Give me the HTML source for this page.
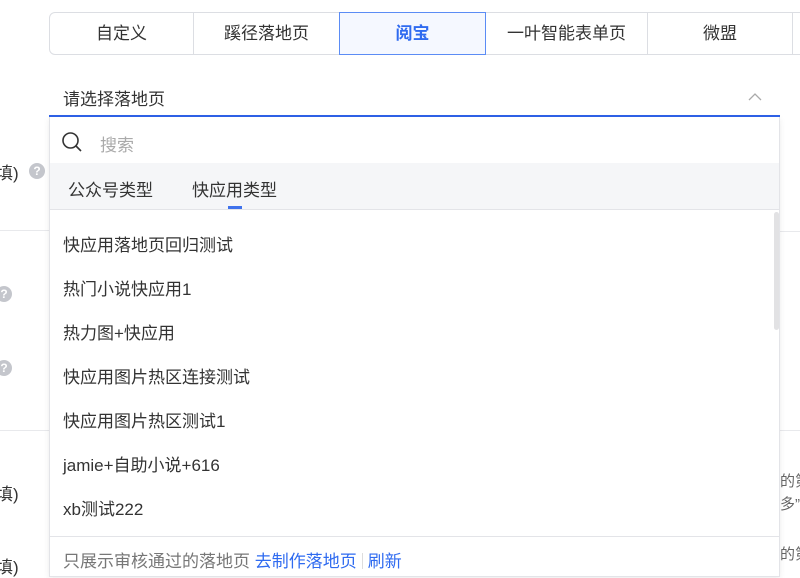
<!DOCTYPE html>
<html><head><meta charset="utf-8"><style>
*{margin:0;padding:0;box-sizing:border-box}
body{width:800px;height:574px;overflow:hidden;background:#fff;font-family:"Liberation Sans","Noto Sans CJK SC",sans-serif;color:#333;position:relative}
.a{position:absolute;white-space:nowrap}
.tab{position:absolute;top:12px;height:43px;border:1px solid #dcdee3;border-left:none;text-align:center;line-height:41px;font-size:17px;color:#333;background:#fff}
.it{position:absolute;left:63px;font-size:17px;color:#333;line-height:20px;white-space:nowrap}
.q{position:absolute;width:16px;height:16px;border-radius:50%;background:#c4c6cc;color:#fff;font-size:12px;line-height:16px;text-align:center;font-weight:bold}
.lbl{position:absolute;left:0;font-size:17px;color:#333;white-space:nowrap}
</style></head><body>
<div class="tab" style="left:49px;width:145px;border-left:1px solid #dcdee3;border-radius:6px 0 0 6px">自定义</div>
<div class="tab" style="left:194px;width:146px">蹊径落地页</div>
<div class="tab" style="left:339px;width:147px;border:1px solid #5b8cf5;background:#f5f8ff;color:#2f6bf0;font-weight:bold">阅宝</div>
<div class="tab" style="left:486px;width:162px">一叶智能表单页</div>
<div class="tab" style="left:648px;width:145px">微盟</div>
<div class="tab" style="left:793px;width:20px"></div>

<div class="a" style="left:63px;top:85px;font-size:17px;color:#333">请选择落地页</div>
<svg class="a" style="left:748px;top:92px" width="14" height="10"><path d="M1 8 L7 2 L13 8" fill="none" stroke="#aaa" stroke-width="1.3"/></svg>
<div class="a" style="left:49px;top:115px;width:731px;height:2px;background:#2f62e8"></div>

<div class="a" style="left:0;top:230px;width:49px;height:1px;background:#e8e9ec"></div>
<div class="a" style="left:0;top:430px;width:49px;height:1px;background:#e8e9ec"></div>
<div class="a" style="left:780px;top:231px;width:20px;height:1px;background:#e8e9ec"></div>
<div class="a" style="left:780px;top:430px;width:20px;height:1px;background:#e8e9ec"></div>
<div class="lbl" style="top:159px;left:-4px">填)</div><div class="q" style="left:29px;top:163px">?</div>
<div class="q" style="left:-4px;top:286px">?</div>
<div class="q" style="left:-4px;top:360px">?</div>
<div class="lbl" style="top:480px;left:-4px">填)</div>
<div class="lbl" style="top:553px;left:-4px">填)</div>
<div class="a" style="left:780px;top:470px;font-size:15px;color:#666">的第</div>
<div class="a" style="left:780px;top:493px;font-size:15px;color:#666">多”</div>
<div class="a" style="left:780px;top:543px;font-size:15px;color:#666">的第</div>

<div class="a" style="left:49px;top:117px;width:731px;height:460px;background:#fff;border:1px solid #e3e4e8;border-top:none;box-shadow:0 2px 6px rgba(0,0,0,.08)"></div>
<svg class="a" style="left:61px;top:131px" width="22" height="22"><circle cx="9.5" cy="9.5" r="7.5" fill="none" stroke="#333" stroke-width="1.6"/><path d="M15 15 L20 20" stroke="#333" stroke-width="1.6"/></svg>
<div class="a" style="left:100px;top:131px;font-size:17px;color:#aaa">搜索</div>
<div class="a" style="left:50px;top:163px;width:729px;height:47px;background:#f5f6f8;border-bottom:1px solid #e3e4e8"></div>
<div class="a" style="left:68px;top:176px;font-size:17px;color:#333">公众号类型</div>
<div class="a" style="left:192px;top:176px;font-size:17px;color:#333">快应用类型</div>
<div class="a" style="left:228px;top:206px;width:14px;height:3px;background:#3f72ec"></div>
<div class="a" style="left:774px;top:212px;width:5px;height:118px;background:#e2e2e4;border-radius:3px"></div>

<div class="it" style="top:236px">快应用落地页回归测试</div>
<div class="it" style="top:280px">热门小说快应用1</div>
<div class="it" style="top:324px">热力图+快应用</div>
<div class="it" style="top:368px">快应用图片热区连接测试</div>
<div class="it" style="top:412px">快应用图片热区测试1</div>
<div class="it" style="top:456px">jamie+自助小说+616</div>
<div class="it" style="top:500px">xb测试222</div>
<div class="a" style="left:50px;top:536px;width:729px;height:1px;background:#e3e4e8"></div>
<div class="a" style="left:63px;top:547px;font-size:17px;color:#777">只展示审核通过的落地页 <span style="color:#2f6bf0">去制作落地页</span><span style="display:inline-block;width:1px;height:16px;background:#ddd;margin:0 5px;vertical-align:-2px"></span><span style="color:#2f6bf0">刷新</span></div>
</body></html>
